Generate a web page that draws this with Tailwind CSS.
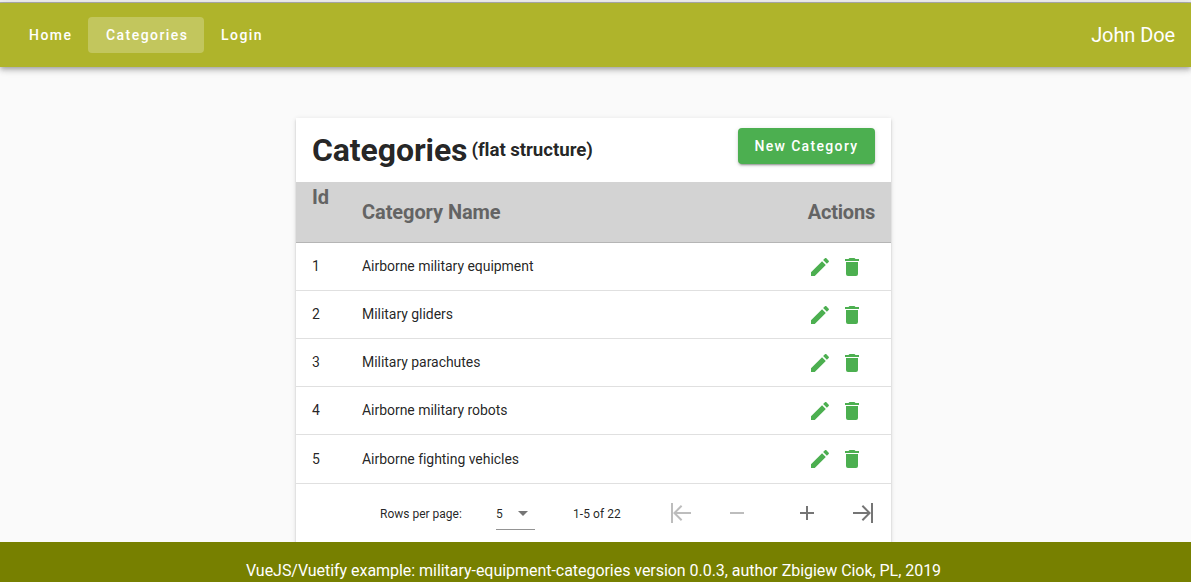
<!DOCTYPE html>
<html lang="en">
<head>
<meta charset="utf-8">
<title>Categories</title>
<script src="https://cdn.jsdelivr.net/npm/@tailwindcss/browser@4"></script>
</head>
<body class="h-[582px] overflow-hidden bg-[#fafafa] font-['Roboto',sans-serif] text-black/87">
<svg class="hidden">
  <symbol id="pencil" viewBox="0 0 24 24"><path d="M20.71,7.04C21.1,6.65 21.1,6 20.71,5.63L18.37,3.29C18,2.9 17.35,2.9 16.96,3.29L15.12,5.12L18.87,8.87M3,17.25V21H6.75L17.81,9.93L14.06,6.18L3,17.25Z"/></symbol>
  <symbol id="trash" viewBox="0 0 24 24"><path d="M19,4H15.5L14.5,3H9.5L8.5,4H5V6H19M6,19A2,2 0 0,0 8,21H16A2,2 0 0,0 18,19V7H6V19Z"/></symbol>
</svg>
<div class="flex h-full flex-col">
  <div class="h-[3px] shrink-0 border-b border-[#b0b0b0] bg-[#f0f0f0]"></div>
  <header class="z-10 flex h-16 shrink-0 items-center bg-[#afb42b] pr-4 pl-3 text-white shadow-[0_2px_4px_-1px_rgba(0,0,0,.2),0_4px_5px_0_rgba(0,0,0,.14),0_1px_10px_0_rgba(0,0,0,.12)]">
    <nav class="flex text-sm font-medium tracking-[1.45px]">
      <a class="flex h-9 w-[76px] items-center pl-[17px]">Home</a>
      <a class="flex h-9 w-[116px] items-center rounded bg-white/24 pl-[18px]">Categories</a>
      <a class="flex h-9 items-center pl-[17px]">Login</a>
    </nav>
    <div class="ml-auto text-xl tracking-[-0.1px]">John Doe</div>
  </header>
  <main class="flex min-h-0 flex-1 flex-col overflow-hidden pt-[51px] pl-[296px]">
    <section class="h-[480px] w-[595px] shrink-0 bg-white shadow-[0_3px_1px_-2px_rgba(0,0,0,.2),0_2px_2px_0_rgba(0,0,0,.14),0_1px_5px_0_rgba(0,0,0,.12)]">
      <div class="flex h-16 items-center px-4">
        <h1 class="text-[32px] leading-8 font-bold tracking-[-0.1px] whitespace-nowrap">Categories</h1>
        <span class="ml-1 text-[18.72px] font-bold tracking-[-0.06px] whitespace-nowrap">(flat structure)</span>
        <button class="mb-2 ml-auto h-9 w-[137px] rounded bg-[#4caf50] text-sm font-medium tracking-[1.34px] whitespace-nowrap text-white shadow-[0_3px_1px_-2px_rgba(0,0,0,.2),0_2px_2px_0_rgba(0,0,0,.14),0_1px_5px_0_rgba(0,0,0,.12)]">New Category</button>
      </div>
      <div class="flex h-[61px] items-center border-b border-[#b5b5b5] bg-[#d3d3d3] px-4 text-xl font-bold text-[#646464]">
        <div class="w-[50px] self-start pt-px">Id</div>
        <div class="tracking-[-0.08px]">Category Name</div>
        <div class="ml-auto tracking-[-0.2px]">Actions</div>
      </div>
      <div id="rows" class="text-sm"></div>
      <div class="flex h-[58px] items-center text-xs">
        <span class="ml-[84px] w-[116px] pt-0.5">Rows per page:</span>
        <span class="flex h-[33px] w-[39px] items-center border-b border-[#949494]"><span class="pt-0.5">5</span><svg class="ml-2 h-6 w-6 shrink-0 fill-[#757575]" viewBox="0 0 24 24"><path d="M7,10L12,15L17,10H7Z"/></svg></span>
        <span class="ml-[38px] w-[96px] pt-0.5 tracking-[0.06px]">1-5 of 22</span>
        <svg class="h-6 w-6 fill-[#bdbdbd]" viewBox="0 0 24 24"><path d="M11.92,19.92L4,12L11.92,4.08L13.33,5.5L7.83,11H22V13H7.83L13.34,18.5L11.92,19.92M4,12V2H2V22H4V12Z"/></svg>
        <svg class="ml-8 h-6 w-6 fill-[#bdbdbd]" viewBox="0 0 24 24"><path d="M19,13H5V11H19V13Z"/></svg>
        <svg class="ml-[46px] h-6 w-6 fill-[#757575]" viewBox="0 0 24 24"><path d="M19,13H13V19H11V13H5V11H11V5H13V11H19V13Z"/></svg>
        <svg class="ml-8 h-6 w-6 fill-[#757575]" viewBox="0 0 24 24"><path d="M12.08,4.08L20,12L12.08,19.92L10.67,18.5L16.17,13H2V11H16.17L10.67,5.5L12.08,4.08M20,12V22H22V2H20V12Z"/></svg>
      </div>
    </section>
  </main>
  <footer class="z-10 h-10 shrink-0 bg-[#778000] pt-[17px] text-center text-base tracking-[-0.04px] text-white"><span class="mr-1">VueJS/Vuetify example: military-equipment-categories version 0.0.3, author Zbigiew Ciok, PL, 2019</span></footer>
</div>
<script>
const names = ['Airborne military equipment', 'Military gliders', 'Military parachutes', 'Airborne military robots', 'Airborne fighting vehicles'];
document.getElementById('rows').innerHTML = names.map((name, i) => `
  <div class="group flex h-12 items-start border-b border-[#e0e0e0] px-4 last:h-[49px]">
    <div class="w-[50px] pt-[13px] group-last:pt-3.5">${i + 1}</div>
    <div class="pt-[13px] tracking-[-0.04px] group-last:pt-3.5">${name}</div>
    <svg class="mt-3 ml-auto h-6 w-6 fill-[#4caf50]"><use href="#pencil"/></svg>
    <svg class="mt-3 mr-[11px] ml-2 h-6 w-6 fill-[#4caf50]"><use href="#trash"/></svg>
  </div>`).join('');
</script>
</body>
</html>
